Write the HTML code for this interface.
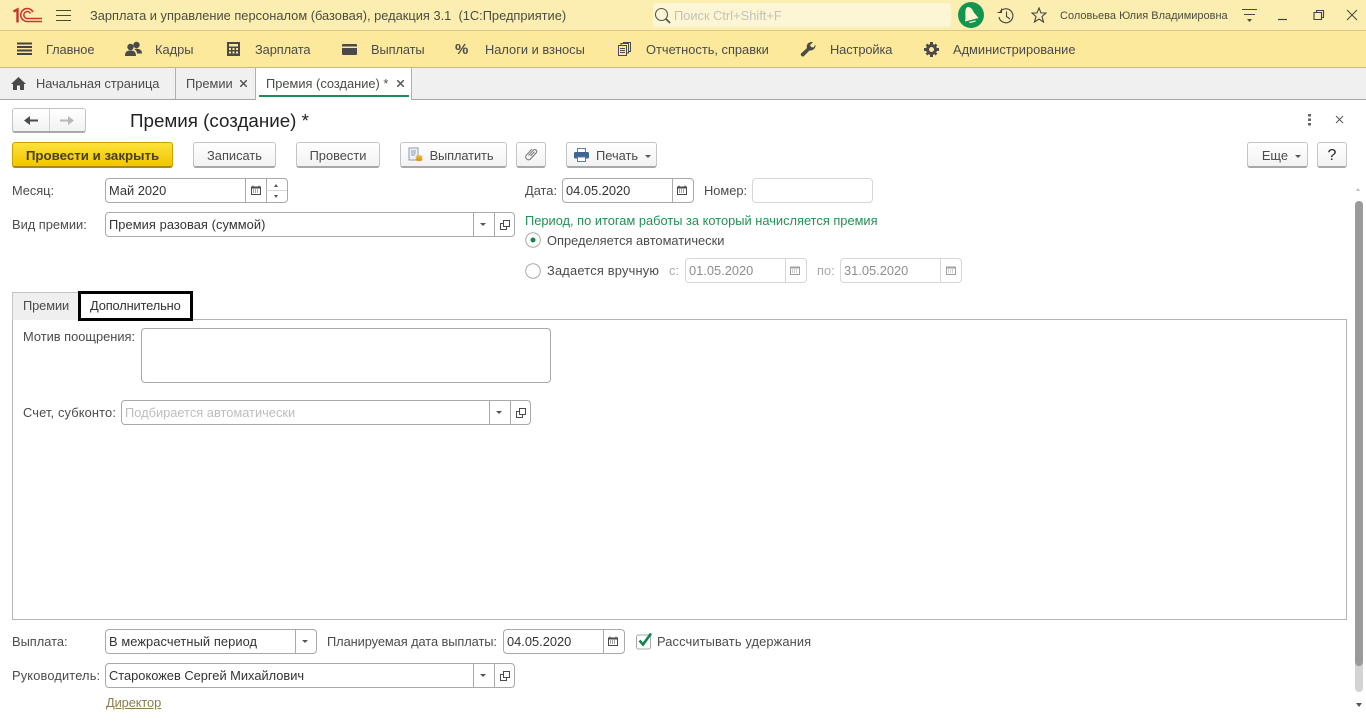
<!DOCTYPE html>
<html lang="ru"><head><meta charset="utf-8"><title>Премия (создание)</title>
<style>
html,body{margin:0;padding:0;background:#fff}
body{width:1366px;height:728px;overflow:hidden;position:relative;font-family:"Liberation Sans",Arial,sans-serif;font-size:12.85px;color:#4b4b4b}
.a,.t,.f,.b,svg.i{position:absolute}
.t{white-space:nowrap;line-height:16px}
.m .t{margin-top:1px}
.v{color:#333}
.f{box-sizing:border-box;border:1px solid #a9a9a9;border-radius:4px;background:#fff;height:25px}
.f.d{border-color:#d6d6d6}
.s{position:absolute;top:0;bottom:0;width:0;border-left:1px solid #a9a9a9}
.d .s{border-color:#d6d6d6}
.b{box-sizing:border-box;height:26px;border:1px solid #c4c4c4;border-bottom:2px solid #a8a8a8;border-radius:3px;background:linear-gradient(#fff,#f2f2f2);text-align:center;line-height:25px;color:#4b4b4b;white-space:nowrap}
.tri{position:absolute;width:0;height:0;border-left:3px solid transparent;border-right:3px solid transparent;border-top:3px solid #555}
.triu{position:absolute;width:0;height:0;border-left:2.5px solid transparent;border-right:2.5px solid transparent;border-bottom:3px solid #555}
</style></head><body>

<div class="a" style="left:0;top:0;width:1366px;height:30px;background:#fbeeb0;border-bottom:1px solid #d8c98a"></div>
<div class="a" style="left:0;top:31px;width:1366px;height:36px;background:#fce99c;border-bottom:1px solid #c9bb80"></div>
<div class="a" style="left:0;top:68px;width:1366px;height:31px;background:#f0f0f0;border-bottom:1px solid #a5a5a5"></div>

<!-- 1C logo -->
<svg class="i" style="left:12px;top:7px" width="32" height="17" viewBox="0 0 32 17" fill="none" stroke="#c8352a">
<path d="M1.500 4.500L5.500 2.500V15.500" stroke-width="2.400"/>
<path d="M21 5A6.500 6.500 0 1 0 15.500 14.500H30" stroke-width="1.500"/>
<path d="M18.500 6.500A3.500 3.500 0 1 0 15.500 11.500H30" stroke-width="1.500"/>
</svg>
<svg class="i" style="left:56px;top:9px" width="15" height="13" stroke="#4a4a3a" stroke-width="1"><path d="M0 1.500H15M0 6.500H15M0 11.500H15"/></svg>
<div class="t" style="left:90px;top:8px;color:#4d4d40">Зарплата и управление персоналом (базовая), редакция 3.1&nbsp; (1С:Предприятие)</div>

<div class="a" style="left:653px;top:3px;width:298px;height:24px;background:#fdf6d4;border-radius:3px"></div>
<svg class="i" style="left:654px;top:7px" width="17" height="17" fill="none" stroke="#555"><circle cx="7.500" cy="7.500" r="6" stroke-width="1.100"/><path d="M12 12L16 16" stroke-width="1.800"/></svg>
<div class="t" style="left:674px;top:8px;color:#c2c2b8">Поиск Ctrl+Shift+F</div>

<svg class="i" style="left:958px;top:2px" width="26" height="26" viewBox="0 0 26 26"><circle cx="13" cy="13" r="13" fill="#12964f"/><path d="M10 5C13 5 15 8 15.500 10L20.500 16L7 19.500C8 16 7 12 7.500 9C7.500 7 8.500 5 10 5Z" fill="#fdf6d0"/><path d="M11.500 20.500L17.500 19" stroke="#fdf6d0" stroke-width="1.300"/></svg>
<svg class="i" style="left:997px;top:7px" width="18" height="18" viewBox="0 0 18 18" fill="none" stroke="#444" stroke-width="1.100"><path d="M3 5A7 7 0 1 1 2 10"/><path d="M0.500 5.500H4.500V1.500" stroke-width="1"/><path d="M9.500 4.500V9.500L13 12"/></svg>
<svg class="i" style="left:1031px;top:7px" width="16" height="16" viewBox="0 0 16 16" fill="none" stroke="#444" stroke-width="1.100"><path d="M8 1L10 6H15L11 9.500L12.500 15L8 12L3.500 15L5 9.500L1 6H6Z"/></svg>
<div class="t" style="left:1060px;top:8px;font-size:11px;color:#4d4d40">Соловьева Юлия Владимировна</div>
<svg class="i" style="left:1242px;top:9px" width="15" height="15" stroke="#4a4a3a" fill="#4a4a3a"><path d="M0 .5H15M2 5.500H13" fill="none"/><path d="M5 10H10L7.500 13Z" stroke="none"/></svg>
<svg class="i" style="left:1278px;top:9px" width="80" height="14" fill="none" stroke="#444"><path d="M0 10.500H9" stroke-width="1.200"/><path d="M36 3.500H43.500V10.500H36ZM38.500 3.500V1.500H45.500V8.500H43.500" stroke-width="1.100"/><path d="M69 1L79 11M79 1L69 11" stroke-width="1"/></svg>

<!-- Section panel -->
<svg class="i" style="left:17px;top:42px" width="15" height="14" stroke="#444" stroke-width="2"><path d="M0 1.500H15M0 5H15M0 8.500H15M0 12H15"/></svg>
<div class="t" style="left:46px;top:42px;letter-spacing:-.1px">Главное</div>
<svg class="i" style="left:125px;top:41px" width="17" height="16" viewBox="0 0 17 16" fill="#4a4a4a"><circle cx="5.500" cy="6" r="3.200"/><circle cx="11.500" cy="4" r="3.200"/><path d="M0 15C0 10 3 9.500 5.500 9.500S11 10 11 15ZM9 8C11 7.500 17 7 17 12.500H12C12 10.500 11 9 9 8Z"/></svg>
<div class="t" style="left:155px;top:42px">Кадры</div>
<svg class="i" style="left:227px;top:42px" width="13" height="14" viewBox="0 0 13 14"><rect width="13" height="14" fill="#4a4a4a"/><rect x="2" y="2" width="9" height="2.500" fill="#fce99c"/><path d="M2 6H4V8H2ZM5.500 6H7.500V8H5.500ZM9 6H11V8H9ZM2 9.500H4V11.500H2ZM5.500 9.500H7.500V11.500H5.500ZM9 9.500H11V11.500H9Z" fill="#fce99c"/></svg>
<div class="t" style="left:255px;top:42px;letter-spacing:-.1px">Зарплата</div>
<svg class="i" style="left:342px;top:44px" width="15" height="11"><rect width="15" height="11" rx="1" fill="#4a4a4a"/><rect y="2.500" width="15" height="1.500" fill="#fce99c"/></svg>
<div class="t" style="left:371px;top:42px;letter-spacing:-.1px">Выплаты</div>
<div class="t" style="left:455px;top:42px;font-size:15px;font-weight:bold;color:#4a4a4a">%</div>
<div class="t" style="left:485px;top:42px">Налоги и взносы</div>
<svg class="i" style="left:618px;top:42px" width="13" height="14" viewBox="0 0 13 14" fill="none" stroke="#4a4a4a" stroke-width="1"><rect x=".5" y="3.500" width="8" height="10"/><path d="M3 3.500V1.500H10.500V11H8.500M5.500 1.500V.5H12.500V9.500H10.500M2 6.500H7M2 8.500H7M2 10.500H7"/></svg>
<div class="t" style="left:646px;top:42px">Отчетность, справки</div>
<svg class="i" style="left:800px;top:41px" width="16" height="16" viewBox="0 0 16 16"><path d="M1 12.500L7 7C6 4 8 1 12 1L13 1.200L10 4L11 6L13.500 6.500L15.500 3.500C16 7 13 10 9.500 9.500L3.500 15.500C2 16 0 14 1 12.500Z" fill="#4a4a4a"/></svg>
<div class="t" style="left:830px;top:42px;letter-spacing:-.1px">Настройка</div>
<svg class="i" style="left:924px;top:42px" width="15" height="15" viewBox="0 0 15 15"><circle cx="7.500" cy="7.500" r="4" fill="none" stroke="#4a4a4a" stroke-width="3"/><path d="M6 0H9V3H6ZM6 12H9V15H6ZM0 6H3V9H0ZM12 6H15V9H12ZM1.500 3.500L3.500 1.500L5 3.500L3.500 5ZM13.500 3.500L11.500 1.500L10 3.500L11.500 5ZM1.500 11.500L3.500 13.500L5 11.500L3.500 10ZM13.500 11.500L11.500 13.500L10 11.500L11.500 10Z" fill="#4a4a4a"/></svg>
<div class="t" style="left:953px;top:42px">Администрирование</div>

<!-- Open tabs -->
<svg class="i" style="left:11px;top:77px" width="15" height="13" viewBox="0 0 15 13"><path d="M7.500 0L15 7H13V13H9V8.500H6V13H2V7H0Z" fill="#4a4a4a"/></svg>
<div class="t" style="left:36px;top:76px;letter-spacing:-.05px">Начальная страница</div>
<div class="a" style="left:175px;top:68px;width:1px;height:31px;background:#b0b0b0"></div>
<div class="t" style="left:186px;top:76px">Премии</div>
<svg class="i" style="left:240px;top:80px" width="7" height="7" stroke="#555" stroke-width="1.500"><path d="M0 0L7 7M7 0L0 7"/></svg>
<div class="a" style="left:255px;top:68px;width:157px;height:32px;background:#fff;border-left:1px solid #b0b0b0;border-right:1px solid #b0b0b0;box-sizing:border-box"></div>
<div class="a" style="left:259px;top:95px;width:150px;height:2px;background:#1f8a58"></div>
<div class="t" style="left:266px;top:76px">Премия (создание) *</div>
<svg class="i" style="left:397px;top:80px" width="7" height="7" stroke="#555" stroke-width="1.500"><path d="M0 0L7 7M7 0L0 7"/></svg>

<!-- Title row -->
<div class="b" style="left:12px;top:108px;width:74px;height:25px"></div>
<div class="a" style="left:49px;top:109px;width:1px;height:22px;background:#d0d0d0"></div>
<svg class="i" style="left:24px;top:115px" width="50" height="11" fill="#4a4a4a"><path d="M0 5.500L6 1V4.500H14V6.500H6V10Z"/><path d="M50 5.500L44 1V4.500H36V6.500H44V10Z" fill="#b8b8b8"/></svg>
<div class="t" style="left:130px;top:110px;font-size:18.8px;line-height:21px;color:#222">Премия (создание) *</div>
<svg class="i" style="left:1307px;top:114px" width="5" height="12" fill="#666"><rect x="1" y="0" width="3" height="2.500"/><rect x="1" y="4.500" width="3" height="2.500"/><rect x="1" y="9" width="3" height="2.500"/></svg>
<svg class="i" style="left:1335px;top:115px" width="9" height="9" stroke="#555" stroke-width="1"><path d="M1 1L8 8M8 1L1 8"/></svg>

<!-- Command bar -->
<div class="b" style="left:12px;top:142px;width:161px;background:linear-gradient(#fbe23a,#f2c500);border-color:#c9a200;border-bottom-color:#a98c10;font-weight:bold;font-size:13.3px;color:#4a4020">Провести и закрыть</div>
<div class="b" style="left:193px;top:142px;width:83px">Записать</div>
<div class="b" style="left:296px;top:142px;width:84px">Провести</div>
<div class="b" style="left:400px;top:142px;width:107px;padding-left:16px;letter-spacing:-.1px">Выплатить</div>
<svg class="i" style="left:408px;top:147px" width="15" height="16" viewBox="0 0 15 16"><rect x="1" y="1" width="9" height="12" fill="#eef1f6" stroke="#8d9bb0"/><path d="M3 4H8M3 6H8M3 8H7" stroke="#8d9bb0"/><ellipse cx="11" cy="10" rx="3.500" ry="1.700" fill="#e6b52e"/><ellipse cx="11" cy="12.500" rx="3.500" ry="1.700" fill="#d69f1f"/></svg>
<div class="b" style="left:516px;top:142px;width:30px"></div>
<svg class="i" style="left:524px;top:147px" width="15" height="15" viewBox="0 0 15 15" fill="none" stroke="#7d7d7d" stroke-width="1.100"><path d="M4.500 8.500L9.500 3A2 2 0 0 1 12.500 5.500L6 12.500A3 3 0 0 1 2 8.500L8 2M6.500 9L10.500 4.800"/></svg>
<div class="b" style="left:566px;top:142px;width:91px;text-align:left;padding-left:29px">Печать</div>
<svg class="i" style="left:574px;top:148px" width="15" height="14" viewBox="0 0 15 14"><rect x="3.500" y=".5" width="8" height="4" fill="#fff" stroke="#5d7d9f"/><rect x="0" y="4" width="15" height="6.500" rx="1.500" fill="#3f668f"/><rect x="3.500" y="9" width="8" height="4.500" fill="#fff" stroke="#5d7d9f"/></svg>
<div class="tri" style="left:645px;top:155px"></div>
<div class="b" style="left:1247px;top:142px;width:61px;text-align:right;padding-right:19px">Еще</div>
<div class="tri" style="left:1295px;top:155px"></div>
<div class="b" style="left:1317px;top:142px;width:30px;font-size:16px;color:#222">?</div>

<div class="m">
<!-- Row 1 -->
<div class="t" style="left:12px;top:182px;letter-spacing:-.05px">Месяц:</div>
<div class="f" style="left:105px;top:178px;width:183px"><div class="s" style="left:139px"></div><div class="s" style="left:160px"></div><div class="a" style="left:160px;top:11px;width:21px;height:1px;background:#d5d5d5"></div><div class="triu" style="left:168px;top:5px"></div><div class="tri" style="left:168px;top:16px;border-left-width:2.500px;border-right-width:2.500px"></div></div>
<div class="t v" style="left:109px;top:182px">Май 2020</div>
<svg class="i" style="left:251px;top:185px" width="10" height="10" viewBox="0 0 10 10"><path d="M0 1.500H10V10H0Z" fill="#4a4a4a"/><rect x="1" y="3.500" width="8" height="5.500" fill="#fff"/><path d="M2 .5V2M8 .5V2" stroke="#4a4a4a"/><path d="M2 5H8M2 7H8" stroke="#4a4a4a" stroke-dasharray="1 1"/></svg>

<div class="t" style="left:525px;top:182px">Дата:</div>
<div class="f" style="left:562px;top:178px;width:132px"><div class="s" style="left:109px"></div></div>
<div class="t v" style="left:566px;top:182px">04.05.2020</div>
<svg class="i" style="left:677px;top:185px" width="10" height="10" viewBox="0 0 10 10"><path d="M0 1.500H10V10H0Z" fill="#4a4a4a"/><rect x="1" y="3.500" width="8" height="5.500" fill="#fff"/><path d="M2 .5V2M8 .5V2" stroke="#4a4a4a"/><path d="M2 5H8M2 7H8" stroke="#4a4a4a" stroke-dasharray="1 1"/></svg>
<div class="t" style="left:704px;top:182px">Номер:</div>
<div class="f d" style="left:752px;top:178px;width:121px"></div>

<!-- Row 2 -->
<div class="t" style="left:12px;top:216px">Вид премии:</div>
<div class="f" style="left:105px;top:212px;width:410px"><div class="s" style="left:367px"></div><div class="s" style="left:388px"></div><div class="tri" style="left:374px;top:10px"></div></div>
<div class="t v" style="left:109px;top:216px;letter-spacing:.08px">Премия разовая (суммой)</div>
<svg class="i" style="left:500px;top:220px" width="10" height="10" fill="none" stroke="#4a4a4a"><path d="M3.500 6.500V.5H9.500V6.500ZM3.500 3.500H.5V9.500H6.500V6.500"/></svg>

<div class="t" style="left:525px;top:212px;color:#1d9355">Период, по итогам работы за который начисляется премия</div>
<svg class="i" style="left:525px;top:232px" width="16" height="16"><circle cx="8" cy="8" r="7.300" fill="#fff" stroke="#a9a9a9"/><circle cx="8" cy="8" r="2.500" fill="#12864c"/></svg>
<div class="t" style="left:547px;top:232px">Определяется автоматически</div>
<svg class="i" style="left:525px;top:263px" width="16" height="16"><circle cx="8" cy="8" r="7.300" fill="#fff" stroke="#a9a9a9"/></svg>
<div class="t" style="left:547px;top:262px;letter-spacing:.2px">Задается вручную</div>
<div class="t" style="left:669px;top:262px;color:#aaa">с:</div>
<div class="f d" style="left:685px;top:258px;width:122px"><div class="s" style="left:99px"></div></div>
<div class="t" style="left:689px;top:262px;color:#8e8e8e">01.05.2020</div>
<svg class="i" style="left:790px;top:265px" width="10" height="10" viewBox="0 0 10 10"><path d="M0 1.500H10V10H0Z" fill="#a0a0a0"/><rect x="1" y="3.500" width="8" height="5.500" fill="#fff"/><path d="M2 5H8M2 7H8" stroke="#a0a0a0" stroke-dasharray="1 1"/></svg>
<div class="t" style="left:817px;top:262px;color:#aaa">по:</div>
<div class="f d" style="left:840px;top:258px;width:122px"><div class="s" style="left:99px"></div></div>
<div class="t" style="left:844px;top:262px;color:#8e8e8e">31.05.2020</div>
<svg class="i" style="left:946px;top:265px" width="10" height="10" viewBox="0 0 10 10"><path d="M0 1.500H10V10H0Z" fill="#a0a0a0"/><rect x="1" y="3.500" width="8" height="5.500" fill="#fff"/><path d="M2 5H8M2 7H8" stroke="#a0a0a0" stroke-dasharray="1 1"/></svg>

<!-- Tabs -->
<div class="a" style="left:12px;top:319px;width:1335px;height:301px;box-sizing:border-box;border:1px solid #b4b4b4"></div>
<div class="a" style="left:12px;top:292px;width:67px;height:28px;box-sizing:border-box;background:#efefef;border:1px solid #c4c4c4;border-bottom:0"></div>
<div class="t" style="left:23px;top:297px;letter-spacing:-.1px">Премии</div>
<div class="a" style="left:78px;top:291px;width:115px;height:30px;box-sizing:border-box;border:3px solid #000;background:#fff"></div>
<div class="t v" style="left:90px;top:297px;letter-spacing:-.14px">Дополнительно</div>

<div class="t" style="left:23px;top:328px">Мотив поощрения:</div>
<div class="f" style="left:141px;top:328px;width:410px;height:55px"></div>
<div class="t" style="left:23px;top:404px;letter-spacing:.14px">Счет, субконто:</div>
<div class="f" style="left:121px;top:400px;width:410px"><div class="s" style="left:367px"></div><div class="s" style="left:388px"></div><div class="tri" style="left:374px;top:10px"></div></div>
<div class="t" style="left:125px;top:404px;color:#bdbdbd">Подбирается автоматически</div>
<svg class="i" style="left:516px;top:408px" width="10" height="10" fill="none" stroke="#4a4a4a"><path d="M3.500 6.500V.5H9.500V6.500ZM3.500 3.500H.5V9.500H6.500V6.500"/></svg>

<!-- Bottom -->
<div class="t" style="left:12px;top:633px">Выплата:</div>
<div class="f" style="left:105px;top:629px;width:212px"><div class="s" style="left:189px"></div><div class="tri" style="left:196px;top:10px"></div></div>
<div class="t v" style="left:109px;top:633px;letter-spacing:.09px">В межрасчетный период</div>
<div class="t" style="left:327px;top:633px;letter-spacing:-.08px">Планируемая дата выплаты:</div>
<div class="f" style="left:503px;top:629px;width:122px"><div class="s" style="left:99px"></div></div>
<div class="t v" style="left:507px;top:633px">04.05.2020</div>
<svg class="i" style="left:608px;top:636px" width="10" height="10" viewBox="0 0 10 10"><path d="M0 1.500H10V10H0Z" fill="#4a4a4a"/><rect x="1" y="3.500" width="8" height="5.500" fill="#fff"/><path d="M2 .5V2M8 .5V2" stroke="#4a4a4a"/><path d="M2 5H8M2 7H8" stroke="#4a4a4a" stroke-dasharray="1 1"/></svg>
<svg class="i" style="left:636px;top:632px" width="17" height="18" viewBox="0 0 17 18"><rect x=".5" y="3" width="14" height="14" rx="2" fill="#fff" stroke="#a9a9a9"/><path d="M3.500 8.500L7 12.500L15 1.500" fill="none" stroke="#12864c" stroke-width="2.600"/></svg>
<div class="t" style="left:657px;top:633px;letter-spacing:.13px">Рассчитывать удержания</div>

<div class="t" style="left:12px;top:667px;letter-spacing:.15px">Руководитель:</div>
<div class="f" style="left:105px;top:663px;width:410px"><div class="s" style="left:367px"></div><div class="s" style="left:388px"></div><div class="tri" style="left:374px;top:10px"></div></div>
<div class="t v" style="left:109px;top:667px">Старокожев Сергей Михайлович</div>
<svg class="i" style="left:500px;top:671px" width="10" height="10" fill="none" stroke="#4a4a4a"><path d="M3.500 6.500V.5H9.500V6.500ZM3.500 3.500H.5V9.500H6.500V6.500"/></svg>
<div class="t" style="left:106px;top:694px;color:#8a7d50;text-decoration:underline;letter-spacing:-.1px">Директор</div>
</div>

<!-- Scrollbar -->
<div class="triu" style="left:1356px;top:188px;border-bottom-color:#bdbdbd"></div>
<div class="a" style="left:1355px;top:201px;width:8px;height:491px;border-radius:4px;background:#d3d3d3"></div>
<div class="a" style="left:1355px;top:201px;width:8px;height:465px;border-radius:4px;background:#9a9a9a"></div>
<div class="tri" style="left:1356px;top:703px;border-left-width:3px;border-right-width:3px;border-top-width:4px"></div>
</body></html>
